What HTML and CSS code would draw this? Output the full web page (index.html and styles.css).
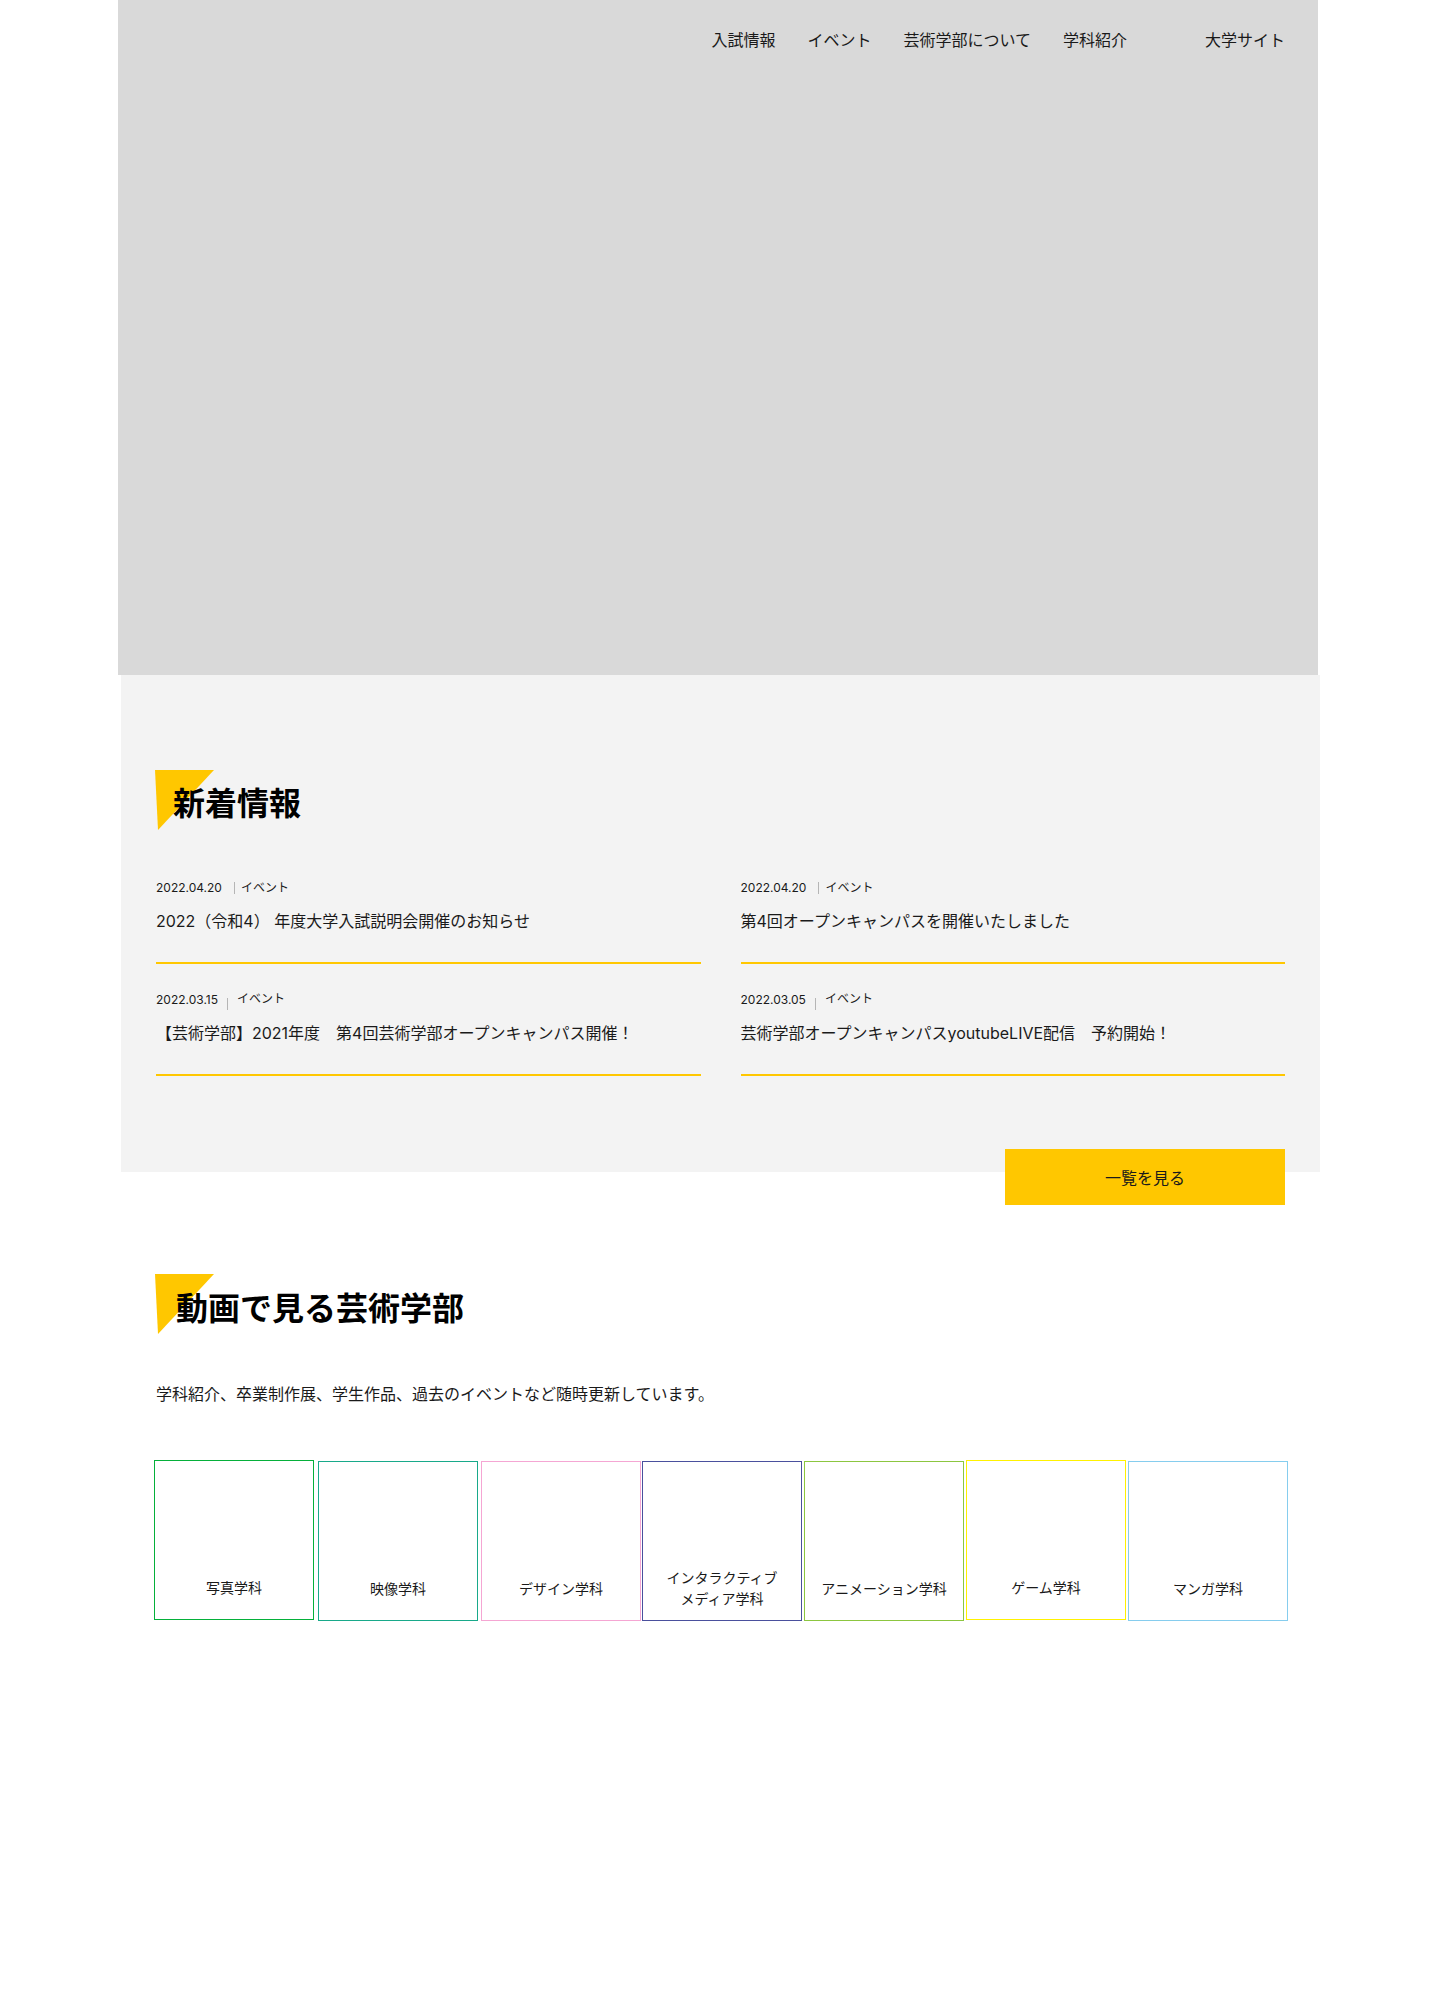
FILE: index.html
```html
<!DOCTYPE html>
<html lang="ja">
<head>
<meta charset="utf-8">
<title>芸術学部</title>
<link rel="stylesheet" href="styles.css">
</head>
<body>
<header class="hero">
  <nav class="gnav">
    <a class="gnav-item" href="#">入試情報</a>
    <a class="gnav-item" href="#">イベント</a>
    <a class="gnav-item" href="#">芸術学部について</a>
    <a class="gnav-item" href="#">学科紹介</a>
    <a class="gnav-item gnav-item--site" href="#">大学サイト</a>
  </nav>
</header>

<section class="news">
  <h2 class="sec-title sec-title--news">新着情報</h2>
  <ul class="news-list">
    <li class="news-item">
      <div class="meta"><span class="meta-date">2022.04.20</span><span class="meta-bar"></span><span class="meta-cat">イベント</span></div>
      <p class="news-title">2022（令和4） 年度大学入試説明会開催のお知らせ</p>
    </li>
    <li class="news-item">
      <div class="meta"><span class="meta-date">2022.04.20</span><span class="meta-bar"></span><span class="meta-cat">イベント</span></div>
      <p class="news-title">第4回オープンキャンパスを開催いたしました</p>
    </li>
    <li class="news-item">
      <div class="meta meta--offset"><span class="meta-date">2022.03.15</span><span class="meta-bar"></span><span class="meta-cat">イベント</span></div>
      <p class="news-title">【芸術学部】2021年度　第4回芸術学部オープンキャンパス開催！</p>
    </li>
    <li class="news-item">
      <div class="meta meta--offset"><span class="meta-date">2022.03.05</span><span class="meta-bar"></span><span class="meta-cat">イベント</span></div>
      <p class="news-title">芸術学部オープンキャンパスyoutubeLIVE配信　予約開始！</p>
    </li>
  </ul>
  <a class="more-btn" href="#">一覧を見る</a>
</section>

<section class="movie">
  <h2 class="sec-title sec-title--movie">動画で見る芸術学部</h2>
  <p class="movie-lead">学科紹介、卒業制作展、学生作品、過去のイベントなど随時更新しています。</p>
  <ul class="dept-list">
    <li class="dept dept--photo"><span class="dept-label">写真学科</span></li>
    <li class="dept dept--video"><span class="dept-label">映像学科</span></li>
    <li class="dept dept--design"><span class="dept-label">デザイン学科</span></li>
    <li class="dept dept--media"><span class="dept-label">インタラクティブ<br>メディア学科</span></li>
    <li class="dept dept--anime"><span class="dept-label">アニメーション学科</span></li>
    <li class="dept dept--game"><span class="dept-label">ゲーム学科</span></li>
    <li class="dept dept--manga"><span class="dept-label">マンガ学科</span></li>
  </ul>
</section>
</body>
</html>
```

FILE: styles.css
```css
* {
  box-sizing: border-box;
}

body {
  margin: 0;
  background: #fff;
  color: #1a1a1a;
  font-family: Inter, "Noto Sans CJK JP", "Noto Sans", sans-serif;
  min-height: 2000px;
}

a {
  color: inherit;
  text-decoration: none;
}

ul {
  list-style: none;
  margin: 0;
  padding: 0;
}

p {
  margin: 0;
}

/* hero */
.hero {
  margin-left: 118px;
  width: 1200px;
  height: 675px;
  background: #d9d9d9;
}

.gnav {
  display: flex;
  justify-content: flex-end;
  gap: 32px;
  padding: 28px 33px 0 0;
}

.gnav-item {
  font-size: 16px;
  line-height: 24px;
  color: #1a1a1a;
}

.gnav-item--site {
  margin-left: 46px;
}

/* section titles */
.sec-title {
  position: relative;
  margin: 0;
  font-size: 32px;
  line-height: 40px;
  font-weight: 700;
  color: #000;
}

.sec-title::before {
  content: "";
  position: absolute;
  top: 0;
  left: -1px;
  width: 60px;
  height: 60px;
  background: #ffc700;
  clip-path: polygon(0 0, 59px 0, 3px 60px);
  z-index: -1;
}

.sec-title--news {
  padding: 14px 0 0 17px;
}

.sec-title--movie {
  padding: 15px 0 0 20px;
}

/* news */
.news {
  position: relative;
  z-index: 0;
  display: flex;
  flex-direction: column;
  margin-left: 121px;
  width: 1199px;
  background: #f3f3f3;
  padding: 95px 35px 0 35px;
}

.news-list {
  display: grid;
  grid-template-columns: 1fr 1fr;
  column-gap: 40px;
  row-gap: 27px;
  margin-top: 55px;
}

.news-item {
  padding-bottom: 29px;
  border-bottom: 2px solid #ffc700;
}

.meta {
  display: flex;
  align-items: center;
  height: 18px;
  font-size: 12px;
  line-height: 18px;
  color: #1a1a1a;
}

.meta-bar {
  width: 1px;
  height: 12px;
  background: #b5b5b5;
  margin: 0 6px 0 12px;
}

.meta--offset .meta-bar {
  margin: 7px 9px 0 9px;
}

.meta--offset .meta-cat {
  margin-bottom: 3px;
}

.news-title {
  margin-top: 12px;
  font-size: 16px;
  line-height: 24px;
}

.more-btn {
  align-self: flex-end;
  display: flex;
  align-items: center;
  justify-content: center;
  width: 280px;
  height: 56px;
  margin-top: 73px;
  margin-bottom: -33px;
  background: #ffc700;
  font-size: 16px;
  color: #1a1a1a;
}

/* movie */
.movie {
  position: relative;
  z-index: 0;
  padding: 102px 0 0 0;
}

.movie .sec-title,
.movie-lead {
  margin-left: 156px;
}

.movie-lead {
  margin-top: 53px;
  font-size: 16px;
  line-height: 24px;
}

.dept-list {
  display: flex;
  gap: 2px;
  margin: 55px 0 0 154px;
  width: 1134px;
}

.dept {
  display: flex;
  flex-direction: column;
  justify-content: flex-end;
  width: 160px;
  height: 160px;
  flex: none;
  padding-bottom: 11px;
  border: 1px solid #ccc;
  background: #fff;
}

.dept-label {
  display: flex;
  align-items: center;
  justify-content: center;
  min-height: 42px;
  font-size: 14px;
  line-height: 21px;
  text-align: center;
  color: #1a1a1a;
}

.dept--photo { border-color: #04b03a; margin-top: -1px; }
.dept--video { border-color: #18a98a; margin-left: 2px; }
.dept--design { border-color: #f5a6d3; margin-left: 1px; }
.dept--media { border-color: #4a509d; margin-left: -1px; }
.dept--anime { border-color: #8cc640; }
.dept--game { border-color: #fff200; margin-top: -1px; }
.dept--manga { border-color: #86cdee; }
```
